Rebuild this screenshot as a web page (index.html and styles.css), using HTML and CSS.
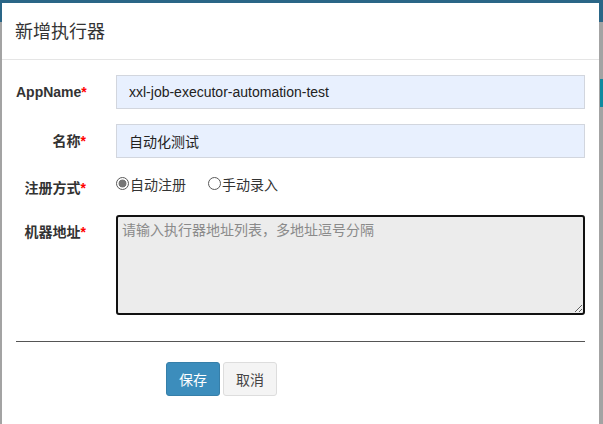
FILE: index.html
```html
<!DOCTYPE html>
<html lang="zh">
<head>
<meta charset="utf-8">
<title>新增执行器</title>
<link rel="stylesheet" href="styles.css">
</head>
<body>
<div class="page">
  <div class="page-top"></div>
  <div class="page-side">
    <div class="side-block"></div>
  </div>
</div>
<div class="modal">
  <div class="modal-header">
    <h4 class="modal-title">新增执行器</h4>
  </div>
  <div class="modal-body">
    <form class="form">
      <div class="form-group">
        <label class="control-label">AppName<span class="req">*</span></label>
        <input class="form-control" type="text" value="xxl-job-executor-automation-test">
      </div>
      <div class="form-group">
        <label class="control-label">名称<span class="req">*</span></label>
        <input class="form-control" type="text" value="自动化测试">
      </div>
      <div class="form-group group-radio">
        <label class="control-label label-radio">注册方式<span class="req">*</span></label>
        <div class="radios">
          <label class="radio-inline"><input type="radio" name="addressType" class="radio" checked>自动注册</label>
          <label class="radio-inline"><input type="radio" name="addressType" class="radio">手动录入</label>
        </div>
      </div>
      <div class="form-group">
        <label class="control-label">机器地址<span class="req">*</span></label>
        <textarea class="textarea" placeholder="请输入执行器地址列表，多地址逗号分隔"></textarea>
      </div>
      <hr class="divider">
      <div class="actions">
        <button type="button" class="btn btn-primary">保存</button>
        <button type="button" class="btn btn-default">取消</button>
      </div>
    </form>
  </div>
</div>
</body>
</html>
```

FILE: styles.css
```css
* { box-sizing: border-box; }

html, body {
  margin: 0;
  padding: 0;
  width: 603px;
  height: 424px;
  overflow: hidden;
}

body {
  background: #a3a3a3;
  font-family: "Liberation Sans", "Noto Sans CJK SC", sans-serif;
  font-size: 14px;
  line-height: 20px;
  color: #333;
  position: relative;
}

.page {
  height: 424px;
  display: flex;
  flex-direction: column;
}

.page-top {
  height: 22px;
  background: #2a6687;
}

.page-side {
  flex: 1;
  display: flex;
  flex-direction: column;
  align-items: flex-end;
}

.side-block {
  margin-top: 57px;
  width: 3px;
  height: 28px;
  background: #0e8a9f;
}

.modal {
  position: absolute;
  top: 3px;
  left: 2px;
  width: 597px;
  height: 440px;
  background: #fff;
}

.modal-header {
  padding: 15px 13px;
  border-bottom: 1px solid #e5e5e5;
}

.modal-title {
  margin: 0;
  font-family: "Noto Sans CJK SC", "Liberation Sans", sans-serif;
  font-size: 18px;
  font-weight: 400;
  line-height: 25.7px;
  color: #333;
}

.modal-body {
  padding: 15px 14px 0 14px;
}

.form-group {
  display: grid;
  grid-template-columns: 70px 1fr;
  column-gap: 30px;
  margin-bottom: 15px;
}

.control-label {
  padding-top: 7px;
  text-align: right;
  font-weight: 700;
  font-size: 14px;
  line-height: 20px;
  color: #333;
  white-space: nowrap;
  font-family: "Liberation Sans", "Noto Sans CJK SC", sans-serif;
}

.req {
  color: #f00;
}

.form-control {
  height: 34px;
  padding: 6px 12px;
  border: 1px solid #d2d6de;
  border-radius: 0;
  background: #e8f0fe;
  font-family: "Liberation Sans", "Noto Sans CJK SC", sans-serif;
  font-size: 14px;
  color: #222;
  outline: none;
  width: 100%;
}

.group-radio {
  height: 27px;
}

.label-radio {
  padding-top: 5px;
}

.radios {
  display: flex;
  align-items: center;
  height: 22px;
}

.radio-inline {
  display: inline-flex;
  align-items: center;
  margin-right: 22px;
  font-size: 14px;
  line-height: 20px;
  color: #333;
  font-family: "Noto Sans CJK SC", sans-serif;
}

.radio {
  appearance: none;
  -webkit-appearance: none;
  width: 13px;
  height: 13px;
  margin: 0 1px 0 0;
  border: 1px solid #5a5a5a;
  border-radius: 50%;
  background: #fff;
}

.radio:checked {
  background: radial-gradient(circle, #777 0 3.6px, #fff 4.3px);
}

.textarea {
  height: 100px;
  width: 100%;
  padding: 2px 4px;
  border: 2px solid #111;
  border-radius: 3px;
  background: #ececec;
  font-family: "Noto Sans CJK SC", "Liberation Sans", sans-serif;
  font-size: 14px;
  line-height: 20px;
  color: #333;
  resize: vertical;
  outline: none;
}

.textarea::placeholder {
  color: #8a8a8a;
}

.divider {
  margin: 26px 0 0 0;
  height: 0;
  border: 0;
  border-top: 1px solid #555;
}

.actions {
  display: flex;
  gap: 3px;
  padding-top: 20px;
  padding-left: 150px;
}

.btn {
  height: 34px;
  padding: 6px 12px;
  border-radius: 3px;
  font-family: "Noto Sans CJK SC", sans-serif;
  font-size: 14px;
  line-height: 20px;
  cursor: pointer;
}

.btn-primary {
  background: #3c8dbc;
  border: 1px solid #367fa9;
  color: #fff;
}

.btn-default {
  background: #f4f4f4;
  border: 1px solid #ddd;
  color: #444;
}
```
